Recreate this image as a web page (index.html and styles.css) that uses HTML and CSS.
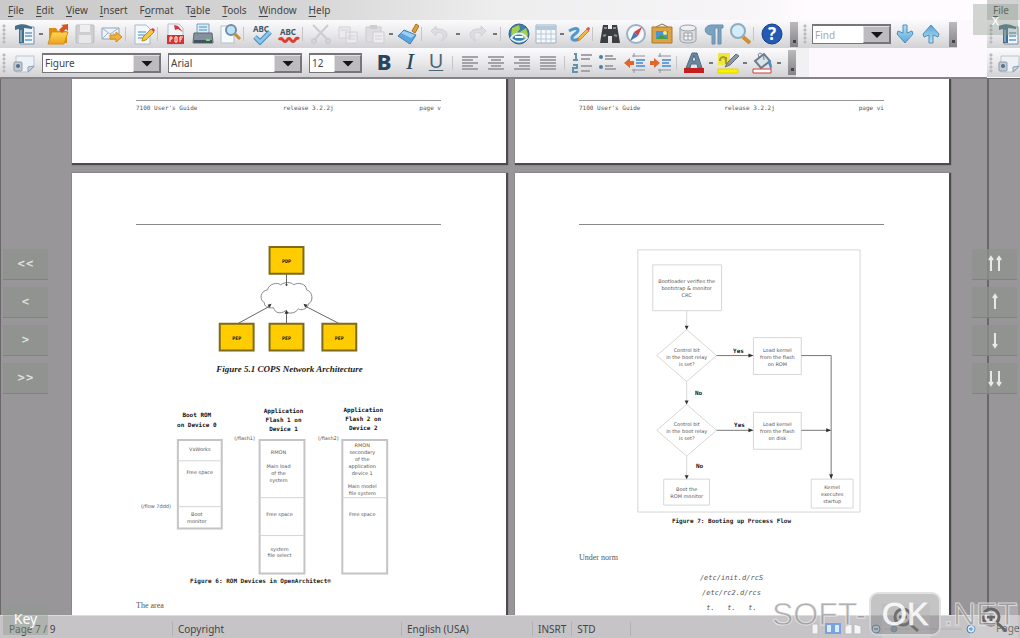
FILE: index.html
```html
<!DOCTYPE html>
<html lang="en">
<head>
<meta charset="utf-8">
<title>Document editor</title>
<link rel="stylesheet" href="styles.css">
</head>
<body>
<svg class="defs" aria-hidden="true">
  <defs>
    <linearGradient id="blue" x1="0" y1="0" x2="0" y2="1"><stop offset="0" stop-color="#b4e2f8"/><stop offset="1" stop-color="#5ba5d4"/></linearGradient>
    <linearGradient id="gold" x1="0" y1="0" x2="0" y2="1"><stop offset="0" stop-color="#ffd75a"/><stop offset="1" stop-color="#efa21a"/></linearGradient>
    <symbol id="i-new" viewBox="0 0 22 22"><path d="M6 4h14v17H6z" fill="#eef5fa" stroke="#7890a4"/><path d="M1 3c4-2 9-2 12-1l5 2v2l-8-1v15H5V6L1 7z" fill="#466e88"/><path d="M7 7v12" stroke="#7fa5bd" stroke-width="2"/><path d="M11 10h7M11 13h7M11 17h7" stroke="#8bb2d0" stroke-width="2"/></symbol>
    <symbol id="i-style" viewBox="0 0 22 22"><path d="M3 4h18v11l-5 5H3z" fill="#eef2f6" stroke="#bcc5cd"/><path d="M21 14l-6 6v-5z" fill="#c8d7e4" stroke="#8fa2b2"/><rect x="1" y="10" width="8" height="9" rx="1" fill="#c2cbd3" stroke="#8f9ba7"/><circle cx="5" cy="14" r="2" fill="#4d7190"/></symbol>
    <symbol id="i-down" viewBox="0 0 22 22"><path d="M9 2h4v8l5-2 1 3-8 9-8-9 1-3 5 2z" fill="url(#blue)" stroke="#4f8fb8"/></symbol>
  </defs>
</svg>

<div class="desktop">
  <main class="window">
    <nav class="menubar" aria-label="Menu">
      <button><u>F</u>ile</button><button><u>E</u>dit</button><button><u>V</u>iew</button><button><u>I</u>nsert</button><button>F<u>o</u>rmat</button><button>T<u>a</u>ble</button><button><u>T</u>ools</button><button><u>W</u>indow</button><button><u>H</u>elp</button>
    </nav>

    <div class="bars">
    <div class="toolbar standard">
      <span class="grip"></span>
      <button class="tool" aria-label="New"><svg><use href="#i-new"/></svg></button><button class="more" aria-label="New options"></button>
      <button class="tool" aria-label="Open"><svg viewBox="0 0 22 22"><path d="M2 5h7l2 3h9v12H2z" fill="#d98e12"/><path d="M5 9h16l-4 12H1z" fill="url(#gold)" stroke="#d9920f"/><path d="M14 2l7-1v7l-2-2-4 4-3-3 4-4z" fill="#d9541f"/></svg></button>
      <button class="tool" aria-label="Save" disabled><svg viewBox="0 0 22 22"><rect x="2" y="2" width="18" height="18" rx="1" fill="#cfced1" stroke="#bdbcc0"/><rect x="6" y="2" width="10" height="7" fill="#eeedf0"/><rect x="5" y="12" width="12" height="8" fill="#e8e7ea"/></svg></button>
      <button class="tool" aria-label="Mail"><svg viewBox="0 0 22 22"><path d="M1 5h17v11H1z" fill="#edf3f9" stroke="#8fa6bd"/><path d="M1 5l8 6 9-6M1 16l6-6M18 16l-6-6" fill="none" stroke="#9db1c6"/><path d="M9 12h6V9l6 5-6 5v-3H9z" fill="#f2b13a" stroke="#cf8b18"/></svg></button>
      <span class="sep"></span>
      <button class="tool" aria-label="Edit file"><svg viewBox="0 0 22 22"><path d="M2 2h11l4 4v15H2z" fill="#f3f8fc" stroke="#a9bac8"/><path d="M5 9h8M5 12h7M5 15h5" stroke="#9cc2e0" stroke-width="2"/><path d="M9 18l1-4 8-8 3 3-8 8z" fill="#f6c63e" stroke="#b88c1f"/><path d="M18 6l3 3 1-2-2-2z" fill="#d6445b"/></svg></button>
      <span class="sep"></span>
      <button class="tool" aria-label="Export as PDF"><svg viewBox="0 0 22 22"><path d="M3 1h11l4 4v16H3z" fill="#f2f5f8" stroke="#b6c0c9"/><path d="M9 2l4 1 5 6-5-3-3 1z" fill="#dc3333"/><rect x="2" y="12" width="17" height="9" fill="#d93030"/><path d="M5 19v-5h2v2H5M10 14v5h2v-5zM15 19v-5h3M15 16h2" fill="none" stroke="#fff"/></svg></button>
      <button class="tool" aria-label="Print"><svg viewBox="0 0 22 22"><path d="M5 1h12v10H5z" fill="#d9ebf7" stroke="#7ea0b8"/><path d="M7 4h8M7 7h8" stroke="#8fc0de" stroke-width="2"/><path d="M2 10h18l1 10H1z" fill="#8492a0" stroke="#5b6873"/><path d="M2 17h18v3H2z" fill="#46535e"/><path d="M14 17h4" stroke="#6ee05c" stroke-width="2"/></svg></button>
      <button class="tool" aria-label="Page preview"><svg viewBox="0 0 22 22"><path d="M2 3h13v17H2z" fill="#f7fafc" stroke="#b3c0cb"/><circle cx="12" cy="7" r="5" fill="#bfe1f5" stroke="#6d8fa9" stroke-width="2"/><path d="M16 11l5 5" stroke="#c98b2d" stroke-width="3"/></svg></button>
      <span class="sep"></span>
      <button class="tool" aria-label="Spelling"><svg viewBox="0 0 22 22"><text x="2" y="9" class="abc">ABC</text><path d="M4 14l5 5L19 9" fill="none" stroke="#4a8cbd" stroke-width="5"/><path d="M4 14l5 5L19 9" fill="none" stroke="#8ac7ee" stroke-width="3"/></svg></button>
      <button class="tool" aria-label="Automatic spelling"><svg viewBox="0 0 22 22"><text x="2" y="12" class="abc">ABC</text><path d="M1 17q2-3 4 0t4 0 4 0 4 0 4-1" fill="none" stroke="#df3c31" stroke-width="3"/></svg></button>
      <span class="sep"></span>
      <button class="tool" aria-label="Cut" disabled><svg viewBox="0 0 22 22"><path d="M3 2l14 14M18 2L5 16" stroke="#cdccd0" stroke-width="2"/><circle cx="4" cy="18" r="2" fill="none" stroke="#cdccd0" stroke-width="2"/><circle cx="18" cy="18" r="2" fill="none" stroke="#cdccd0" stroke-width="2"/></svg></button>
      <button class="tool" aria-label="Copy" disabled><svg viewBox="0 0 22 22"><path d="M2 4h11v11H2zM9 9h11v11H9z" fill="#eceaee" stroke="#d2d0d5"/><path d="M11 13h7M11 16h7M4 7h7" stroke="#d2d0d5"/></svg></button>
      <button class="tool" aria-label="Paste" disabled><svg viewBox="0 0 22 22"><path d="M2 4h15v15H2z" fill="#dfdde1" stroke="#cdccd0"/><path d="M6 2h7v4H6z" fill="#cfcdd2"/><path d="M9 9h11v11H9z" fill="#eeecf0" stroke="#cfcdd2"/><path d="M11 13h7M11 16h7" stroke="#d2d0d5"/></svg></button><button class="more" aria-label="Paste options"></button>
      <button class="tool" aria-label="Format paintbrush"><svg viewBox="0 0 22 22"><path d="M15 8l4-7 3 2-4 7z" fill="#e0a03d" stroke="#a86f1a"/><path d="M7 7l12 5-6 9-12-8z" fill="#5aa5e0" stroke="#3f7fb5"/><path d="M7 8l11 4-4 3-10-5z" fill="#9dd0f4"/></svg></button>
      <span class="sep"></span>
      <button class="tool" aria-label="Undo" disabled><svg viewBox="0 0 22 22"><path d="M7 3L2 8l5 5v-3c8-2 9 3 5 8 9-3 8-13-5-12z" fill="#dfdde2" stroke="#d2d0d5"/></svg></button><button class="more wide" aria-label="Undo list"></button>
      <button class="tool" aria-label="Redo" disabled><svg viewBox="0 0 22 22"><path d="M15 3l5 5-5 5v-3c-8-2-9 3-5 8-9-3-8-13 5-12z" fill="#dfdde2" stroke="#d2d0d5"/></svg></button><button class="more wide" aria-label="Redo list"></button>
      <span class="sep"></span>
      <button class="tool" aria-label="Hyperlink"><svg viewBox="0 0 22 22"><circle cx="11" cy="11" r="10" fill="#3b80b2" stroke="#35617f"/><path d="M4 5l7-3 1 4-4 5-5 1zM12 9l6-4 2 7-4 4z" fill="#a4cf4c"/><path d="M3 15c4-6 12-6 16 0-4 5-12 5-16 0z" fill="none" stroke="#e6eef4" stroke-width="2"/><path d="M7 14h8" stroke="#fff" stroke-width="2"/></svg></button>
      <button class="tool" aria-label="Table"><svg viewBox="0 0 22 22"><path d="M1 2h20v18H1z" fill="#f6f9fc" stroke="#9fb1c2"/><path d="M1 3h20v4H1z" fill="#b3c8dc"/><path d="M1 11h20M1 16h20M6 3v17M11 3v17M16 3v17" stroke="#b9c8d6"/></svg></button><button class="more" aria-label="Table options"></button>
      <button class="tool" aria-label="Show draw functions"><svg viewBox="0 0 22 22"><path d="M1 8c9-5 12-1 6 3s-3 8 4 5" fill="none" stroke="#4f97cf" stroke-width="3"/><path d="M10 18l1-4 8-8 2 2-8 8z" fill="#f2b73b" stroke="#c48d2c"/><path d="M18 6l3 2 1-3-2-1z" fill="#d45267"/></svg></button>
      <span class="sep"></span>
      <button class="tool snug" aria-label="Find and replace"><svg viewBox="0 0 22 22"><path d="M4 2h5v4h4V2h5l3 18h-8v-7H9v7H1z" fill="#3a3d41"/><path d="M5 5h3M14 5h3M4 13l3-1M15 12l3 1" stroke="#8a8d91" stroke-width="2"/></svg></button>
      <button class="tool snug" aria-label="Navigator"><svg viewBox="0 0 22 22"><circle cx="11" cy="11" r="9" fill="#f5f8fb" stroke="#9fb0c0" stroke-width="2"/><path d="M17 4l-4 9-4-4z" fill="#dc3c3c"/><path d="M5 18l4-9 4 4z" fill="#4377b5"/></svg></button>
      <button class="tool snug" aria-label="Gallery"><svg viewBox="0 0 22 22"><path d="M5 4l6-3 6 3" fill="none" stroke="#93703a"/><path d="M1 4h20v16H1z" fill="#dda244" stroke="#a87a33"/><path d="M5 8h12v8H5z" fill="#4a95d4"/><path d="M5 16l5-4 7 4z" fill="#49a032"/><circle cx="14" cy="10" r="2" fill="#ffe96b"/></svg></button>
      <button class="tool snug" aria-label="Data sources"><svg viewBox="0 0 22 22"><path d="M3 5v12c0 4 16 4 16 0V5" fill="#d8dadd" stroke="#9ca1a7"/><ellipse cx="11" cy="5" rx="8" ry="3" fill="#eff0f2" stroke="#9ca1a7"/><path d="M7 10h8v7H7zM7 13h8M11 10v7" fill="#f6f7f8" stroke="#9da2a8"/></svg></button>
      <button class="tool snug" aria-label="Nonprinting characters"><svg viewBox="0 0 22 22"><path d="M20 2H9C0 2 0 12 9 12v9h3V5h3v16h3V5h2z" fill="#7ba3c1" stroke="#6790ae"/></svg></button>
      <button class="tool snug" aria-label="Zoom"><svg viewBox="0 0 22 22"><path d="M14 14l7 6" stroke="#cf8f35" stroke-width="4"/><circle cx="9" cy="8" r="7" fill="#d2ecfa" stroke="#8eacc1" stroke-width="2"/></svg></button>
      <span class="sep"></span>
      <button class="tool" aria-label="Help"><svg viewBox="0 0 22 22"><circle cx="11" cy="11" r="10" fill="#2459b4" stroke="#173f86"/><text x="11" y="17" class="qm">?</text></svg></button>
      <button class="endcap" aria-label="Toolbar options"></button>
      <span class="grip"></span>
      <div class="combo find"><input type="text" placeholder="Find" aria-label="Find text"></div>
      <button class="tool snug" aria-label="Find next"><svg><use href="#i-down"/></svg></button>
      <button class="tool snug" aria-label="Find previous"><svg class="flip"><use href="#i-down"/></svg></button>
      <button class="endcap" aria-label="Find toolbar options"></button>
    </div>

    <div class="toolbar formatting">
      <span class="grip"></span>
      <button class="tool" aria-label="Styles"><svg><use href="#i-style"/></svg></button>
      <div class="combo style"><select aria-label="Paragraph style"><option>Figure</option></select></div>
      <div class="combo font"><select aria-label="Font name"><option>Arial</option></select></div>
      <div class="combo size"><select aria-label="Font size"><option>12</option></select></div>
      <button class="tool letter bold" aria-label="Bold">B</button>
      <button class="tool letter italic" aria-label="Italic">I</button>
      <button class="tool letter under" aria-label="Underline">U</button>
      <span class="sep"></span>
      <button class="tool" aria-label="Align left"><svg viewBox="0 0 22 22"><path class="al" d="M3 5h16M3 8h11M3 11h16M3 14h11M3 17h16"/></svg></button>
      <button class="tool" aria-label="Centre"><svg viewBox="0 0 22 22"><path class="al" d="M3 5h16M6 8h10M3 11h16M6 14h10M3 17h16"/></svg></button>
      <button class="tool" aria-label="Align right"><svg viewBox="0 0 22 22"><path class="al" d="M3 5h16M8 8h11M3 11h16M8 14h11M3 17h16"/></svg></button>
      <button class="tool" aria-label="Justify"><svg viewBox="0 0 22 22"><path class="al" d="M3 5h16M3 8h16M3 11h16M3 14h16M3 17h16"/></svg></button>
      <span class="sep"></span>
      <button class="tool" aria-label="Numbering"><svg viewBox="0 0 22 22"><path d="M3 2h2v6M2 8h5M2 13h4v3H2v4h5" fill="none" stroke="#6590ae" stroke-width="2"/><path class="al" d="M10 3h11M10 7h9M10 14h11M10 19h9"/></svg></button>
      <button class="tool" aria-label="Bullets"><svg viewBox="0 0 22 22"><circle cx="4" cy="5" r="2" fill="#4d7ea4"/><circle cx="4" cy="15" r="2" fill="#4d7ea4"/><path class="al" d="M8 4h8M8 7h11M8 14h8M8 17h11"/></svg></button>
      <button class="tool" aria-label="Decrease indent"><svg viewBox="0 0 22 22"><path d="M9 4h13M9 18h13M11 1v4M11 17v4" stroke="#8a949e"/><path d="M13 8h9M13 11h7M13 14h9" stroke="#6b9fd8" stroke-width="2"/><path d="M11 9H7V6l-6 5 6 5v-3h4z" fill="#e0662a"/></svg></button>
      <button class="tool" aria-label="Increase indent"><svg viewBox="0 0 22 22"><path d="M9 4h13M9 18h13M11 1v4M11 17v4" stroke="#8a949e"/><path d="M13 8h9M13 11h7M13 14h9" stroke="#6b9fd8" stroke-width="2"/><path d="M1 9h4V6l6 5-6 5v-3H1z" fill="#e0662a"/></svg></button>
      <span class="sep"></span>
      <button class="tool" aria-label="Font colour"><svg viewBox="0 0 22 22"><path d="M3 16L9 1h5l5 15h-4l-1-4H8l-1 4zM9 9h4l-2-6z" fill="#6a889f" stroke="#4d6b84"/><path d="M1 16h20v5H1z" fill="#c41f1f"/></svg></button><button class="more" aria-label="Font colour list"></button>
      <button class="tool" aria-label="Highlighting"><svg viewBox="0 0 22 22"><path d="M1 1h12v12H1z" fill="#f0e63c"/><path d="M3 9c0-5 5-5 6-1M9 5v7" fill="none" stroke="#a39b33" stroke-width="2"/><path d="M8 15l3-5 8-8 3 2-9 9z" fill="#8a98a6" stroke="#616e7a"/><path d="M1 17h20v4H1z" fill="#fff200" stroke="#e2d400"/></svg></button><button class="more" aria-label="Highlighting list"></button>
      <button class="tool" aria-label="Background colour"><svg viewBox="0 0 22 22"><path d="M4 9l9-7 6 7-9 7z" fill="#dbe3ea" stroke="#6c7b89" stroke-width="2"/><path d="M8 5c-3-5 5-6 5 3" fill="none" stroke="#6c7b89"/><path d="M18 8c4 4 3 9 2 9s-2-4-3-6z" fill="#4a8cc7"/><path d="M2 17h18v4H2z" fill="#fff" stroke="#cc3a3a"/></svg></button><button class="more" aria-label="Background list"></button>
      <button class="endcap" aria-label="Toolbar options"></button>
    </div>
    </div>

    <section class="workspace">
      <article class="page first"><footer><span>7100 User's Guide</span><span>release 3.2.2j</span><span>page v</span></footer></article>
      <article class="page first"><footer><span>7100 User's Guide</span><span>release 3.2.2j</span><span>page vi</span></footer></article>

      <article class="page body">
        <svg class="figure" viewBox="0 0 306 134" role="img" aria-label="COPS network architecture">
          <path d="M132 65C133 59 142 57 145 60C149 57 156 57 158 60C163 57 171 59 171 65C178 67 178 77 173 79C172 85 165 86 163 84C159 90 152 89 150 86C145 90 139 88 138 83C132 84 128 81 129 78C123 75 125 66 132 65Z" fill="#fff" stroke="#888"/>
          <path d="M151 49v12M102 99l33-18M151 99V87M204 99l-35-18" fill="none" stroke="#666"/>
          <g fill="#333"><circle cx="151" cy="60" r="1"/><path d="M136 79l-4 1 2 3zM168 79l4 1-2 3zM151 85l-2 4h4z"/></g>
          <g fill="#fc0" stroke="#7d6a1c" stroke-width="2"><path d="M134 22h34v27h-34zM84 99h34v27H84zM134 99h34v27h-34zM187 99h34v27h-34z"/></g>
          <g class="mono node"><text x="151" y="38">PDP</text><text x="101" y="115">PEP</text><text x="151" y="115">PEP</text><text x="204" y="115">PEP</text></g>
        </svg>
        <p class="caption serif">Figure 5.1 COPS Network Architecture</p>
        <svg class="figure roms" viewBox="0 0 306 172" role="img" aria-label="ROM devices">
          <g class="mono head"><text x="61" y="13">Boot ROM</text><text x="61" y="23">on Device 0</text><text x="148" y="9">Application</text><text x="148" y="18">Flash 1 on</text><text x="148" y="27">Device 1</text><text x="228" y="8">Application</text><text x="228" y="17">Flash 2 on</text><text x="228" y="26">Device 2</text></g>
          <g fill="none" stroke="#c4c4c4"><path d="M42 36h44v89H42zM124 36h45v134h-45zM207 36h45v134h-45z" stroke-width="2"/><path d="M42 57h44M42 103h44M124 94h45M124 132h45M207 94h45" stroke="#d4d4d4"/></g>
          <g class="tiny"><text x="64" y="47">VxWorks</text><text x="64" y="70">Free space</text><text x="61" y="112">Boot</text><text x="61" y="119">monitor</text>
          <text x="143" y="50">RMON</text><text x="143" y="64">Main load</text><text x="143" y="71">of the</text><text x="143" y="78">system</text><text x="144" y="112">Free space</text><text x="144" y="147">system</text><text x="144" y="154">file select</text>
          <text x="227" y="43">RMON</text><text x="227" y="50">secondary</text><text x="227" y="57">of the</text><text x="227" y="64">application</text><text x="227" y="71">device 1</text><text x="227" y="84">Main model</text><text x="227" y="91">file system</text><text x="227" y="112">Free space</text>
          <text x="109" y="36">(/flash1)</text><text x="193" y="36">(/flash2)</text><text x="20" y="104">(/flow 7ddd)</text></g>
        </svg>
        <p class="caption mono">Figure 6: ROM Devices in OpenArchitect®</p>
        <p class="para">The area</p>
      </article>

      <article class="page body">
        <svg class="figure flow" viewBox="0 0 306 288" role="img" aria-label="Booting up process flow">
          <g fill="none" stroke="#d6d6d6"><path d="M59 25h223v263H59zM74 40h69v46H74zM108 86v19M108 105l30 26-30 26-30-26zM108 157v23M108 180l30 26-30 26-30-26zM108 232v23M175 113h48v37h-48zM175 188h48v37h-48zM85 255h46v26H85zM233 255h42v29h-42z"/></g>
          <g fill="none" stroke="#777"><path d="M138 131h36M138 206h36M223 131h30v122M223 206h29"/></g>
          <g fill="#333"><path d="M170 129l5 2-5 2zM170 204l5 2-5 2zM248 204l5 2-5 2zM251 250h4l-2 5zM106 101h4l-2 4zM106 176h4l-2 4zM106 251h4l-2 4z"/></g>
          <g class="mono head"><text x="160" y="128">Yes</text><text x="161" y="203">Yes</text><text x="120" y="171">No</text><text x="121" y="244">No</text></g>
          <g class="tiny"><text x="108" y="58">Bootloader verifies the</text><text x="108" y="65">bootstrap &amp; monitor</text><text x="108" y="72">CRC</text>
          <text x="108" y="127">Control bit</text><text x="108" y="134">in the boot relay</text><text x="108" y="141">is set?</text>
          <text x="199" y="127">Load kernel</text><text x="199" y="134">from the flash</text><text x="199" y="141">on ROM</text>
          <text x="108" y="202">Control bit</text><text x="108" y="209">in the boot relay</text><text x="108" y="216">is set?</text>
          <text x="199" y="202">Load kernel</text><text x="199" y="209">from the flash</text><text x="199" y="216">on disk</text>
          <text x="108" y="267">Boot the</text><text x="108" y="274">ROM monitor</text>
          <text x="254" y="265">Kernel</text><text x="254" y="272">executes</text><text x="254" y="279">startup</text></g>
        </svg>
        <p class="caption mono">Figure 7: Booting up Process Flow</p>
        <p class="para under-norm">Under norm</p>
        <div class="paths"><span>/etc/init.d/rcS</span><span>/etc/rc2.d/rcs</span><span>t. &nbsp; t. &nbsp; t.</span></div>
      </article>
    </section>

    <footer class="status">
      <span class="cell pageno">Page 7 / 9</span><span class="cell copy">Copyright</span><span class="cell lang">English (USA)</span><span class="cell">INSRT</span><span class="cell last">STD</span>
      <svg class="views" viewBox="0 0 176 18" aria-hidden="true">
        <path d="M8 4h6v10H8z" fill="#f3f2f5" stroke="#bbb"/><path d="M22 4h6v9h-6zM30 4h6v9h-6z" fill="#dcebff" stroke="#7aa2dc" stroke-width="2"/><path d="M41 6l7-2v10h-7zM50 4l7 2v8h-7z" fill="#f5f4f7" stroke="#bbb"/>
        <circle cx="72" cy="9" r="4" fill="#cfe2f2" stroke="#557fa7"/><path d="M70 9h4" stroke="#285a8a"/><path d="M80 9h78" stroke="#b4b2b6"/><circle cx="90" cy="9" r="3" fill="#5f88a5" stroke="#486a84"/><circle cx="167" cy="9" r="4" fill="#d5eaf8" stroke="#3c7fb5"/><path d="M165 9h4M167 7v4" stroke="#2c6c9f"/>
      </svg>
    </footer>
  </main>

  <aside class="neighbour" aria-label="Next screen">
    <div class="n-menu"><u>F</u>ile</div>
    <div class="toolbar standard"><span class="grip"></span><svg class="n-icon"><use href="#i-new"/></svg></div>
    <div class="toolbar"><span class="grip"></span><svg class="n-icon"><use href="#i-style"/></svg></div>
    <div class="n-work"></div>
    <div class="n-status">Page</div>
  </aside>

  <nav class="pad left" aria-label="Horizontal scroll"><button>&lt;&lt;</button><button>&lt;</button><button>&gt;</button><button>&gt;&gt;</button></nav>
  <nav class="pad right" aria-label="Vertical scroll">
    <button aria-label="Page up"><svg viewBox="0 0 18 18"><path d="M5 16V2M3 5l2-3 2 3M13 16V2M11 5l2-3 2 3"/></svg></button>
    <button aria-label="Up"><svg viewBox="0 0 18 18"><path d="M9 16V2M7 5l2-3 2 3"/></svg></button>
    <button aria-label="Down"><svg viewBox="0 0 18 18"><path d="M9 2v14M7 13l2 3 2-3"/></svg></button>
    <button aria-label="Page down"><svg viewBox="0 0 18 18"><path d="M5 2v14M3 13l2 3 2-3M13 2v14M11 13l2 3 2-3"/></svg></button>
  </nav>
  <button class="key">Key</button>
  <button class="close" aria-label="Close">x</button>
  <div class="lens">
    <button aria-label="Zoom out"><svg viewBox="0 0 30 30"><circle cx="12" cy="12" r="8"/><path d="M18 18l9 8M8 12h8"/></svg></button>
    <button aria-label="Zoom in"><svg viewBox="0 0 30 30"><circle cx="12" cy="12" r="8"/><path d="M18 18l9 8M8 12h8M12 8v8"/></svg></button>
  </div>
  <div class="watermark"><span>SOFT-</span><span class="ok">OK</span><span>.NET</span></div>
</div>
</body>
</html>
```

FILE: styles.css
```css
* { box-sizing: border-box; }
body { margin: 0; font: 10px/14px "Noto Sans", "Open Sans", sans-serif; color: #444; }
button, input, select { font: inherit; color: inherit; margin: 0; padding: 0; border: 0; background: none; border-radius: 0; }
p { margin: 0; }
.defs { position: absolute; width: 0; height: 0; }
.desktop { position: relative; display: flex; height: 100vh; overflow: hidden; background: #fdf9fd; }
.window { flex: 1; min-width: 0; display: flex; flex-direction: column; }

.menubar { display: flex; flex: none; gap: 12px; height: 20px; padding-left: 8px; align-items: center; background: linear-gradient(90deg, #cbcacb, #d6d5d6 30%, #ededee 50%, #f7f5f7 75%, #fffbff 82%); }
u { text-underline-offset: 2px; }

.bars { flex: none; background: linear-gradient(90deg, #f1f0f2 82%, #fdf8fd 82%); border-bottom: 2px solid #858387; }
.toolbar { display: flex; align-items: center; width: max-content; height: 29px; background: linear-gradient(#fbfafc, #e9e8ea 50%, #d2d1d4); }
.toolbar.standard { height: 28px; }
.grip { flex: none; width: 11px; height: 20px; background: radial-gradient(circle, #b9b8bb 1px, transparent 2px) 0 0 / 8px 4px repeat-y; }
.tool { flex: none; width: 27px; height: 26px; display: flex; align-items: center; justify-content: center; }
.tool.snug, .formatting .tool { width: 26px; }
.tool svg, .n-icon { width: 22px; height: 22px; }
.flip { transform: rotate(180deg); }
.sep { flex: none; width: 5px; height: 14px; border-left: 1px solid #c6c4c7; }
.formatting .sep { width: 8px; background: linear-gradient(#c6c4c7, #c6c4c7) 3px 0 / 1px 14px no-repeat; border-left: 0; }
.more { flex: none; width: 6px; height: 20px; background: linear-gradient(#777, #777) center / 4px 2px no-repeat; }
.more.wide { width: 10px; }
.formatting .more { width: 8px; }
.endcap { flex: none; width: 8px; height: 25px; margin-left: 5px; background: linear-gradient(#444, #444) 3px 18px / 3px 3px no-repeat, linear-gradient(#bab9bc, #858387); }
.standard > .endcap + .grip { margin-left: 3px; }
.abc { font: bold 8px "Noto Sans", sans-serif; fill: #3f5768; }
.qm { font: bold 17px "Noto Sans", sans-serif; fill: #fff; text-anchor: middle; }
.al { fill: none; stroke: #a5a3a8; stroke-width: 2; }
.letter { font: 22px/22px "Noto Sans", sans-serif; color: #27465e; padding-bottom: 3px; }
.letter.bold { font-weight: 800; }
.letter.italic { font-family: "Liberation Serif", serif; font-style: italic; font-size: 24px; }
.letter.under { text-decoration: underline; text-decoration-thickness: 1px; text-underline-offset: 2px; font-size: 20px; color: #4d6679; }

.combo { position: relative; flex: none; display: flex; height: 20px; margin-right: 7px; border: 1px solid #77757a; border-top-width: 2px; background: #fff; }
.combo::before { content: ""; position: absolute; right: 0; top: 0; bottom: 0; width: 25px; background: #bdbbbf; border: 1px solid #e0dfe1; border-right-color: #77757a; border-bottom-color: #77757a; pointer-events: none; }
.combo::after { content: ""; position: absolute; right: 7px; top: 6px; width: 12px; height: 6px; background: #151515; clip-path: polygon(0 0, 100% 0, 50% 100%); pointer-events: none; }
.combo select, .combo input { appearance: none; width: 100%; padding-left: 2px; outline: 0; }
.combo input::placeholder { color: #aaa; opacity: 1; }
.combo.style { width: 119px; margin-left: 5px; }
.combo.font { width: 134px; }
.combo.size { width: 53px; margin-right: 9px; }
.combo.find { width: 79px; margin-right: 1px; }

.workspace { flex: 1; min-height: 0; overflow: hidden; display: grid; grid-template: 84px 1fr / 1fr 1fr; gap: 10px 9px; padding: 0 38px 0 71px; background: #989699; border-left: 1px solid #69676a; }
.page { min-width: 0; padding: 0 65px 0 64px; background: #fff; box-shadow: 1px 1px 1px 1px #4d4b4e; color: #555; }
.page.first { padding-top: 21px; }
.page.first footer { display: flex; justify-content: space-between; border-top: 1px solid #999; font: 6px/13px "DejaVu Sans Mono", monospace; color: #555; }
.page.body { display: flex; flex-direction: column; padding-top: 51px; min-height: 0; }
.figure { flex: none; display: block; width: 100%; border-top: 1px solid #888; overflow: visible; }
.roms { border: 0; margin-top: 28px; }
.caption { text-align: center; white-space: nowrap; color: #222; }
.caption.serif { font: italic bold 9px/14px "Liberation Serif", serif; margin-top: 3px; padding-left: 2px; }
.caption.mono { font: bold 6px/12px "DejaVu Sans Mono", monospace; }
.roms + .caption.mono { padding-right: 56px; }
.flow + .caption.mono { padding-top: 3px; }
.para { font: 8px/12px "Liberation Serif", serif; margin-top: 13px; }
.under-norm { margin-top: 25px; }
.paths { display: grid; justify-items: center; font: italic 7px/15px "DejaVu Sans Mono", monospace; margin-top: 7px; }
svg .mono, svg .tiny { text-anchor: middle; fill: #111; }
.node { font: bold 5px "DejaVu Sans Mono", monospace; }
.head { font: bold 6px "DejaVu Sans Mono", monospace; }
svg .tiny { font: 5px "DejaVu Sans", sans-serif; fill: #555; }

.status { flex: none; display: flex; align-items: center; height: 23px; background: #c7c4c8; border-top: 1px solid #dedbdf; padding-top: 3px; }
.cell { flex: none; padding-left: 5px; border-left: 1px solid #b4b1b5; }
.pageno { width: 172px; padding-left: 9px; border: 0; }
.copy { width: 229px; }
.lang { width: 131px; }
.cell.last { margin-left: 5px; width: 60px; border-right: 1px solid #b4b1b5; }
.views { width: 176px; height: 18px; margin-left: auto; margin-right: 7px; }

.neighbour { flex: none; width: 33px; display: flex; flex-direction: column; overflow: hidden; }
.n-menu { height: 20px; padding: 3px 0 0 6px; background: #d2d1d3; }
.n-icon { flex: none; }
.neighbour .toolbar { width: auto; }
.n-work { flex: 1; margin-top: 1px; background: #989699; border-left: 2px solid #69676a; border-top: 1px solid #69676a; }
.n-status { height: 23px; padding: 6px 0 0 9px; background: #c7c4c8; }

.pad { position: absolute; top: 249px; display: grid; gap: 7px; }
.pad.left { left: 3px; }
.pad.right { right: 3px; }
.pad button { display: grid; place-items: center; width: 45px; height: 31px; background: rgba(142, 146, 142, .75); border-bottom: 1px solid #7f847f; color: #dfe3df; font: bold 10px/28px "DejaVu Sans", sans-serif; }
.pad svg { width: 18px; height: 18px; fill: none; stroke: #e6e9e6; stroke-width: 2; }
.key, .close { position: absolute; background: rgba(139, 154, 139, .4); color: #fff; font-size: 14px; width: 45px; }
.key { left: 3px; bottom: 3px; height: 29px; padding-bottom: 4px; }
.close { right: 2px; top: 4px; height: 31px; }
.lens { position: absolute; right: 2px; bottom: 0; display: flex; gap: 40px; }
.lens button { width: 48px; height: 34px; background: rgba(225, 225, 225, .3); }
.lens svg { width: 30px; height: 30px; fill: rgba(255, 255, 255, .3); stroke: #666; stroke-width: 3; }
.watermark { position: absolute; right: 3px; bottom: 2px; display: flex; align-items: center; gap: 3px; pointer-events: none; font: 32px/44px "Liberation Sans", sans-serif; color: rgba(150, 150, 150, .75); -webkit-text-stroke: 1px rgba(255, 255, 255, .6); }
.ok { width: 72px; text-align: center; border: 2px solid rgba(255, 255, 255, .5); border-radius: 9px; background: rgba(125, 125, 125, .45); color: rgba(255, 255, 255, .85); line-height: 40px; }
```
